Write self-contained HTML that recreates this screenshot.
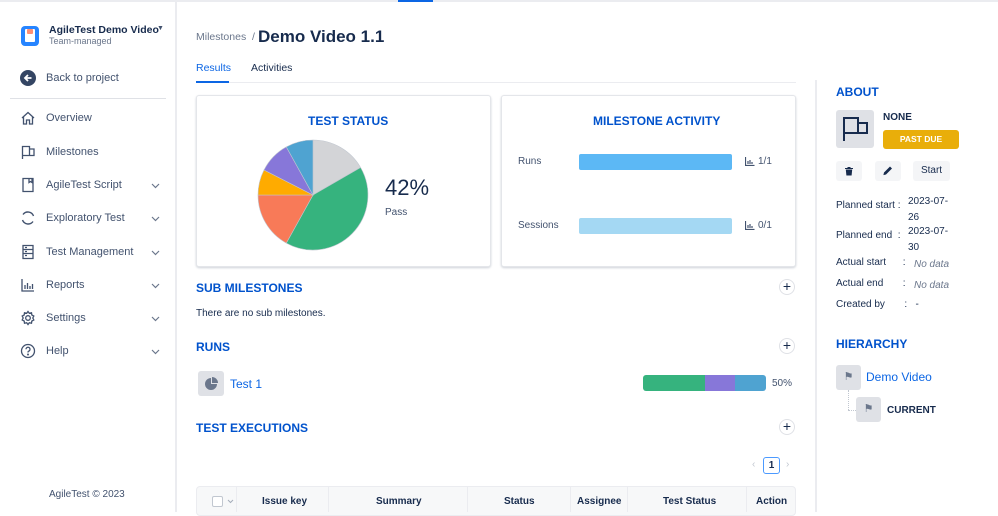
<!DOCTYPE html>
<html><head><meta charset="utf-8"><style>
*{box-sizing:border-box;margin:0;padding:0}
body{width:998px;height:512px;overflow:hidden;background:#fff;font-family:"Liberation Sans",sans-serif;color:#172b4d;position:relative}
.a{position:absolute;white-space:nowrap}
.nav{font-size:11px;color:#42526e}
.ic{position:absolute;left:20px;width:16px;height:16px}
.chev{position:absolute;left:151px;width:9px;height:6px}
.h{color:#0052cc;font-size:12px;font-weight:bold}
.plus{position:absolute;width:16px;height:16px;border:1px solid #dfe1e6;border-radius:50%;font-size:14px;line-height:13px;text-align:center;color:#172b4d}
.card{position:absolute;border:1px solid #e4e6ea;border-radius:3px;box-shadow:0 1px 2px rgba(9,30,66,.2);background:#fff}
.sm{font-size:10px;color:#42526e}
.btn{position:absolute;background:#f4f5f7;border-radius:3px;height:20px}
</style></head><body>
<div class="a" style="left:0;top:0;width:998px;height:2px;background:#ebecf0"></div>
<div class="a" style="left:398px;top:0;width:35px;height:2px;background:#0c66e4"></div>
<div class="a" style="left:175px;top:2px;width:2px;height:510px;background:#ebecf0"></div>

<!-- sidebar -->
<div class="a" style="left:21px;top:26px;width:18px;height:20px;background:#2684ff;border-radius:4px"><div style="margin:3px 4px;width:10px;height:13px;background:#fff;border-radius:1px"><div style="margin:3px 2px;width:6px;height:5px;background:#ff8f73;border-radius:1px"></div></div></div>
<div class="a" style="left:49px;top:24px;font-size:10.5px;font-weight:bold">AgileTest Demo Video</div>
<div class="a" style="left:157px;top:25px;font-size:7px;color:#42526e">▼</div>
<div class="a" style="left:49px;top:36px;font-size:9px;color:#6b778c">Team-managed</div>
<div class="a" style="left:20px;top:70px;width:16px;height:16px;border-radius:50%;background:#344563"><svg width="16" height="16" fill="none" stroke="#fff" stroke-width="1.8"><path d="M11.5 8H5M8 5 5 8l3 3"/></svg></div>
<div class="a nav" style="left:46px;top:72px">Back to project</div>
<div class="a" style="left:10px;top:98px;width:156px;height:1px;background:#dfe1e6"></div>

<svg class="ic" style="top:110px" viewBox="0 0 16 16" fill="none" stroke="#42526e" stroke-width="1.3"><path d="M2 8 8 2.5 14 8M3.5 7v7h3v-4h3v4h3V7"/></svg>
<div class="a nav" style="left:46px;top:112px">Overview</div>
<svg class="ic" style="top:144px" viewBox="0 0 16 16" fill="none" stroke="#42526e" stroke-width="1.3"><path d="M2.5 15V2.5h7v9h-7M9.5 5h4.5v6.5h-4.5"/></svg>
<div class="a nav" style="left:46px;top:146px">Milestones</div>
<svg class="ic" style="top:177px" viewBox="0 0 16 16" fill="none" stroke="#42526e" stroke-width="1.3"><path d="M3 1.5h10v13H3zM9 1.5v4l1.5-1 1.5 1v-4"/></svg>
<div class="a nav" style="left:46px;top:179px">AgileTest Script</div><svg class="chev" style="top:183px" viewBox="0 0 9 6" fill="none" stroke="#6b778c" stroke-width="1.2"><path d="M1 1l3.5 3.5L8 1"/></svg>
<svg class="ic" style="top:210px" viewBox="0 0 16 16" fill="none" stroke="#42526e" stroke-width="1.4"><path d="M13.5 6A6 6 0 0 0 3 4.5M2.5 10A6 6 0 0 0 13 11.5"/></svg>
<div class="a nav" style="left:46px;top:212px">Exploratory Test</div><svg class="chev" style="top:216px" viewBox="0 0 9 6" fill="none" stroke="#6b778c" stroke-width="1.2"><path d="M1 1l3.5 3.5L8 1"/></svg>
<svg class="ic" style="top:244px" viewBox="0 0 16 16" fill="none" stroke="#42526e" stroke-width="1.3"><path d="M3 1.5h10v13H3zM3 5.5h10M3 9.5h10M5 3.5h2M5 7.5h2M5 11.5h2"/></svg>
<div class="a nav" style="left:46px;top:246px">Test Management</div><svg class="chev" style="top:250px" viewBox="0 0 9 6" fill="none" stroke="#6b778c" stroke-width="1.2"><path d="M1 1l3.5 3.5L8 1"/></svg>
<svg class="ic" style="top:277px" viewBox="0 0 16 16" fill="none" stroke="#42526e" stroke-width="1.3"><path d="M2 2v12h12M5 12V8M7.5 12V6M10 12V9M12.5 12V7"/></svg>
<div class="a nav" style="left:46px;top:279px">Reports</div><svg class="chev" style="top:283px" viewBox="0 0 9 6" fill="none" stroke="#6b778c" stroke-width="1.2"><path d="M1 1l3.5 3.5L8 1"/></svg>
<svg class="ic" style="top:310px" viewBox="0 0 16 16" fill="none" stroke="#42526e" stroke-width="1.3"><circle cx="8" cy="8" r="2.3"/><path d="M8 1.5l1.3 1.8 2.2-.5.3 2.2 2 1-1 2 1 2-2 1-.3 2.2-2.2-.5L8 14.5l-1.3-1.8-2.2.5-.3-2.2-2-1 1-2-1-2 2-1 .3-2.2 2.2.5z"/></svg>
<div class="a nav" style="left:46px;top:312px">Settings</div><svg class="chev" style="top:316px" viewBox="0 0 9 6" fill="none" stroke="#6b778c" stroke-width="1.2"><path d="M1 1l3.5 3.5L8 1"/></svg>
<svg class="ic" style="top:343px" viewBox="0 0 16 16" fill="none" stroke="#42526e" stroke-width="1.3"><circle cx="8" cy="8" r="6.5"/><path d="M6 6.3a2 2 0 1 1 2.5 1.9c-.5.2-.5.6-.5 1.3"/><circle cx="8" cy="11.5" r=".4" fill="#42526e"/></svg>
<div class="a nav" style="left:46px;top:345px">Help</div><svg class="chev" style="top:349px" viewBox="0 0 9 6" fill="none" stroke="#6b778c" stroke-width="1.2"><path d="M1 1l3.5 3.5L8 1"/></svg>
<div class="a" style="left:49px;top:489px;font-size:10px;color:#42526e">AgileTest © 2023</div>

<!-- header -->
<div class="a" style="left:196px;top:31px;font-size:10.5px;color:#6b778c">Milestones &nbsp;/</div>
<div class="a" style="left:258px;top:27px;font-size:17px;font-weight:bold">Demo Video 1.1</div>
<div class="a" style="left:196px;top:62px;font-size:10.5px;color:#0c66e4">Results</div>
<div class="a" style="left:251px;top:62px;font-size:10.5px;color:#172b4d">Activities</div>
<div class="a" style="left:196px;top:82px;width:600px;height:1px;background:#ebecf0"></div>
<div class="a" style="left:196px;top:81px;width:33px;height:2px;background:#0c66e4"></div>

<!-- cards -->
<div class="card" style="left:196px;top:95px;width:295px;height:172px"></div>
<div class="a h" style="left:308px;top:114px">TEST STATUS</div>
<svg class="a" style="left:0;top:0" width="998" height="512">
<g stroke="#c1c7d0" stroke-width=".6">
<path d="M313 195L313 140A55 55 0 0 1 360.6 167.5Z" fill="#d3d4d7"/>
<path d="M313 195L360.6 167.5A55 55 0 0 1 286.3 243.1Z" fill="#36b37e"/>
<path d="M313 195L286.3 243.1A55 55 0 0 1 258 195Z" fill="#f87a58"/>
<path d="M313 195L258 195A55 55 0 0 1 264 170Z" fill="#ffab00"/>
<path d="M313 195L264 170A55 55 0 0 1 286.3 146.9Z" fill="#8777d9"/>
<path d="M313 195L286.3 146.9A55 55 0 0 1 313 140Z" fill="#4fa3d1"/>
</g></svg>
<div class="a" style="left:385px;top:175px;font-size:22px;color:#172b4d">42%</div>
<div class="a sm" style="left:385px;top:207px">Pass</div>

<div class="card" style="left:501px;top:95px;width:295px;height:172px"></div>
<div class="a h" style="left:593px;top:114px">MILESTONE ACTIVITY</div>
<div class="a sm" style="left:518px;top:156px">Runs</div>
<div class="a" style="left:579px;top:154px;width:153px;height:16px;background:#5cb8f5;border-radius:2px"></div>
<svg class="a" style="left:745px;top:157px" width="10" height="9" fill="none" stroke="#42526e" stroke-width="1.2"><path d="M.5 0v8.5h9M3 7V4M5 7V3M7 7V5"/></svg>
<div class="a sm" style="left:758px;top:156px">1/1</div>
<div class="a sm" style="left:518px;top:220px">Sessions</div>
<div class="a" style="left:579px;top:218px;width:153px;height:16px;background:#a4d8f3;border-radius:2px"></div>
<svg class="a" style="left:745px;top:221px" width="10" height="9" fill="none" stroke="#42526e" stroke-width="1.2"><path d="M.5 0v8.5h9M3 7V4M5 7V3M7 7V5"/></svg>
<div class="a sm" style="left:758px;top:220px">0/1</div>

<div class="a h" style="left:196px;top:281px">SUB MILESTONES</div>
<div class="plus" style="left:779px;top:279px">+</div>
<div class="a" style="left:196px;top:308px;font-size:10px;color:#172b4d">There are no sub milestones.</div>
<div class="a h" style="left:196px;top:340px">RUNS</div>
<div class="plus" style="left:779px;top:338px">+</div>
<div class="a" style="left:198px;top:371px;width:26px;height:25px;background:#dfe1e6;border-radius:3px"><svg width="26" height="25"><path d="M13 7a6 6 0 1 0 6 6h-6z" fill="#6b778c"/><path d="M14 6v6h6a6 6 0 0 0-6-6z" fill="#6b778c"/></svg></div>
<div class="a" style="left:230px;top:377px;font-size:12px;color:#0c66e4">Test 1</div>
<div class="a" style="left:643px;top:375px;width:123px;height:16px;border-radius:3px;overflow:hidden;display:flex"><div style="width:62px;background:#36b37e"></div><div style="width:30px;background:#8777d9"></div><div style="flex:1;background:#4fa3d1"></div></div>
<div class="a sm" style="left:772px;top:378px">50%</div>
<div class="a h" style="left:196px;top:421px">TEST EXECUTIONS</div>
<div class="plus" style="left:779px;top:419px">+</div>
<div class="a" style="left:752px;top:459px;font-size:10px;color:#c1c7d0">‹</div>
<div class="a" style="left:763px;top:457px;width:17px;height:17px;border:1px solid #4c9aff;border-radius:3px;font-size:10px;text-align:center;line-height:15px;font-weight:bold">1</div>
<div class="a" style="left:786px;top:459px;font-size:10px;color:#c1c7d0">›</div>
<div class="a" style="left:196px;top:486px;width:600px;height:30px;background:#f7f8f9;border:1px solid #ebecf0;border-radius:4px"></div>
<div class="a" style="left:212px;top:496px;width:11px;height:11px;border:1px solid #c1c7d0;border-radius:2px;background:#fff"></div>
<svg class="a" style="left:227px;top:499px" width="7" height="5" fill="none" stroke="#a5adba"><path d="M1 1l2.5 2.5L6 1"/></svg>
<div class="a" style="left:236px;top:486px;width:1px;height:26px;background:#ebecf0"></div>
<div class="a" style="left:328px;top:486px;width:1px;height:26px;background:#ebecf0"></div>
<div class="a" style="left:467px;top:486px;width:1px;height:26px;background:#ebecf0"></div>
<div class="a" style="left:570px;top:486px;width:1px;height:26px;background:#ebecf0"></div>
<div class="a" style="left:627px;top:486px;width:1px;height:26px;background:#ebecf0"></div>
<div class="a" style="left:746px;top:486px;width:1px;height:26px;background:#ebecf0"></div>
<div class="a" style="left:262px;top:496px;font-size:10px;font-weight:bold">Issue key</div>
<div class="a" style="left:376px;top:496px;font-size:10px;font-weight:bold">Summary</div>
<div class="a" style="left:504px;top:496px;font-size:10px;font-weight:bold">Status</div>
<div class="a" style="left:577px;top:496px;font-size:10px;font-weight:bold">Assignee</div>
<div class="a" style="left:663px;top:496px;font-size:10px;font-weight:bold">Test Status</div>
<div class="a" style="left:756px;top:496px;font-size:10px;font-weight:bold">Action</div>

<!-- right panel -->
<div class="a" style="left:815px;top:80px;width:2px;height:432px;background:#ebecf0"></div>
<div class="a h" style="left:836px;top:85px">ABOUT</div>
<div class="a" style="left:836px;top:110px;width:38px;height:38px;background:#dfe1e6;border-radius:3px"><svg width="38" height="38" fill="none" stroke="#172b4d" stroke-width="2"><path d="M8 31V8h14v15H8M22 13h9v10h-9"/></svg></div>
<div class="a" style="left:883px;top:112px;font-size:10px;font-weight:bold">NONE</div>
<div class="a" style="left:883px;top:130px;width:76px;height:19px;background:#e9ae0a;border-radius:3px;color:#fff;font-size:8.5px;font-weight:bold;text-align:center;line-height:19px">PAST DUE</div>
<div class="btn" style="left:836px;top:161px;width:26px"><svg width="26" height="20" fill="#172b4d"><path d="M9 7h8v1H9zM11.5 6h3v1h-3zM9.8 8.5h6.4l-.6 6h-5.2z"/></svg></div>
<div class="btn" style="left:875px;top:161px;width:26px"><svg width="26" height="20" fill="#172b4d"><path d="M15 5.5l2 2-6 6-2.6.6.6-2.6z"/></svg></div>
<div class="btn" style="left:913px;top:161px;width:37px;font-size:10px;text-align:center;line-height:20px">Start</div>
<div class="a sm" style="left:836px;top:200px;color:#172b4d">Planned start :</div>
<div class="a sm" style="left:908px;top:194px;color:#172b4d;line-height:16px">2023-07-<br>26</div>
<div class="a sm" style="left:836px;top:230px;color:#172b4d">Planned end &nbsp;:</div>
<div class="a sm" style="left:908px;top:224px;color:#172b4d;line-height:16px">2023-07-<br>30</div>
<div class="a sm" style="left:836px;top:257px;color:#172b4d">Actual start &nbsp;&nbsp;&nbsp;&nbsp;&nbsp;:</div>
<div class="a sm" style="left:914px;top:259px;color:#6b778c;font-style:italic">No data</div>
<div class="a sm" style="left:836px;top:278px;color:#172b4d">Actual end &nbsp;&nbsp;&nbsp;&nbsp;&nbsp;&nbsp;:</div>
<div class="a sm" style="left:914px;top:280px;color:#6b778c;font-style:italic">No data</div>
<div class="a sm" style="left:836px;top:299px;color:#172b4d">Created by &nbsp;&nbsp;&nbsp;&nbsp;&nbsp;&nbsp;: &nbsp;&nbsp;-</div>
<div class="a h" style="left:836px;top:337px">HIERARCHY</div>
<div class="a" style="left:836px;top:365px;width:25px;height:25px;background:#dfe1e6;border-radius:3px;text-align:center;line-height:25px;font-size:11px;color:#6b778c">⚑</div>
<div class="a" style="left:866px;top:370px;font-size:12px;color:#0c66e4">Demo Video</div>
<div class="a" style="left:848px;top:390px;width:1px;height:20px;border-left:1px dotted #c1c7d0"></div>
<div class="a" style="left:848px;top:410px;width:8px;border-top:1px dotted #c1c7d0"></div>
<div class="a" style="left:856px;top:397px;width:25px;height:25px;background:#dfe1e6;border-radius:3px;text-align:center;line-height:25px;font-size:11px;color:#6b778c">⚑</div>
<div class="a" style="left:887px;top:405px;font-size:10px;font-weight:bold">CURRENT</div>
</body></html>
